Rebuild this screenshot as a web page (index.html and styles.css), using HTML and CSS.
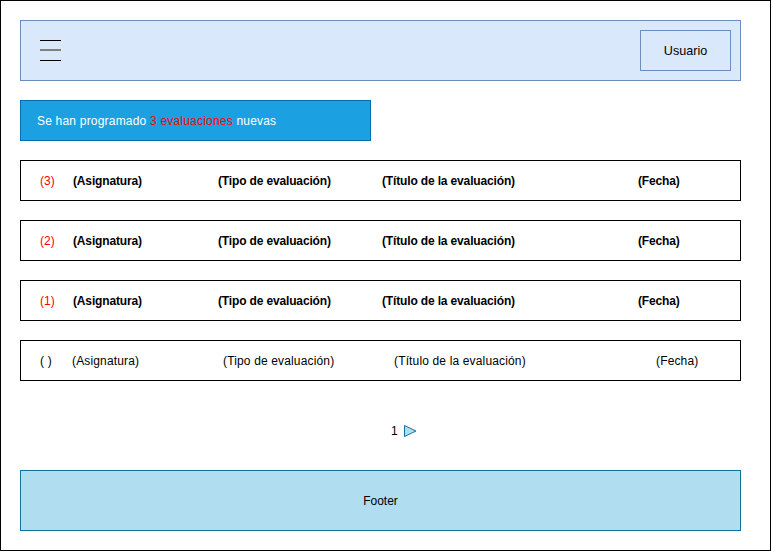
FILE: index.html
```html
<!DOCTYPE html>
<html lang="es">
<head>
<meta charset="utf-8">
<title>Evaluaciones</title>
<link rel="stylesheet" href="styles.css">
</head>
<body>
<div class="frame">
  <header class="header">
    <svg class="hamburger" width="21" height="21" viewBox="0 0 21 21">
      <rect x="0" y="0" width="21" height="1" fill="#000"/>
      <rect x="0" y="9" width="21" height="2" fill="#7f7f7f"/>
      <rect x="0" y="20" width="21" height="1" fill="#000"/>
    </svg>
    <div class="user-btn">Usuario</div>
  </header>

  <div class="banner">Se han programado <span class="red">3 evaluaciones</span> nuevas</div>

  <div class="row bold">
    <span class="c1 red">(3)</span>
    <span class="c2">(Asignatura)</span>
    <span class="c3">(Tipo de evaluación)</span>
    <span class="c4">(Título de la evaluación)</span>
    <span class="c5">(Fecha)</span>
  </div>
  <div class="row bold">
    <span class="c1 red">(2)</span>
    <span class="c2">(Asignatura)</span>
    <span class="c3">(Tipo de evaluación)</span>
    <span class="c4">(Título de la evaluación)</span>
    <span class="c5">(Fecha)</span>
  </div>
  <div class="row bold">
    <span class="c1 red">(1)</span>
    <span class="c2">(Asignatura)</span>
    <span class="c3">(Tipo de evaluación)</span>
    <span class="c4">(Título de la evaluación)</span>
    <span class="c5">(Fecha)</span>
  </div>
  <div class="row plain">
    <span class="c1">( )</span>
    <span class="c2">(Asignatura)</span>
    <span class="c3">(Tipo de evaluación)</span>
    <span class="c4">(Título de la evaluación)</span>
    <span class="c5">(Fecha)</span>
  </div>

  <div class="pagination">
    <span class="page-num">1</span>
    <svg class="next" width="13" height="12" viewBox="0 0 13 12">
      <polygon points="0.5,0.5 12,6 0.5,11.5" fill="#b1ddf0" stroke="#10739e" stroke-width="1"/>
    </svg>
  </div>

  <footer class="footer">Footer</footer>
</div>
</body>
</html>
```

FILE: styles.css
```css
* { box-sizing: border-box; }

html, body {
  margin: 0;
  padding: 0;
  background: #fff;
}

body {
  font-family: "Liberation Sans", Arial, Helvetica, sans-serif;
  font-size: 12px;
  color: #000;
}

.frame {
  width: 771px;
  height: 551px;
  border: 1px solid #000;
  padding: 19px 29px 19px 19px;
  display: flex;
  flex-direction: column;
}

.header {
  width: 721px;
  height: 61px;
  flex: none;
  background: #dae8fc;
  border: 1px solid #6c8ebf;
  display: flex;
  align-items: center;
  justify-content: space-between;
  padding: 0 9px 0 19px;
}

.hamburger {
  display: block;
}

.user-btn {
  width: 91px;
  height: 41px;
  border: 1px solid #6c8ebf;
  background: #dae8fc;
  display: flex;
  align-items: center;
  justify-content: center;
  font-size: 12.6px;
}

.banner {
  margin-top: 19px;
  width: 351px;
  height: 41px;
  flex: none;
  background: #1ba1e2;
  border: 1px solid #006eaf;
  color: #fff;
  display: flex;
  align-items: center;
  padding-left: 16px;
  white-space: pre;
  letter-spacing: 0.2px;
}

.red { color: #ff0000; }

.row {
  margin-top: 19px;
  width: 721px;
  height: 41px;
  flex: none;
  border: 1px solid #000;
  display: grid;
  align-items: center;
  padding-left: 19px;
  white-space: nowrap;
}

.row.bold {
  font-weight: bold;
  letter-spacing: -0.15px;
  grid-template-columns: 33px 145px 164px 256px 1fr;
}

.row.bold .c1 {
  font-weight: normal;
  letter-spacing: 0.1px;
}

.row.plain {
  letter-spacing: 0.15px;
  grid-template-columns: 32px 151px 171px 262px 1fr;
}

.pagination {
  margin-top: 44px;
  height: 12px;
  flex: none;
  display: flex;
  align-items: center;
  padding-left: 371px;
  gap: 6px;
}

.page-num {
  line-height: 12px;
  font-size: 12px;
}

.next { display: block; }

.footer {
  margin-top: 33px;
  width: 721px;
  height: 61px;
  flex: none;
  background: #b1ddf0;
  border: 1px solid #10739e;
  display: flex;
  align-items: center;
  justify-content: center;
}
```
